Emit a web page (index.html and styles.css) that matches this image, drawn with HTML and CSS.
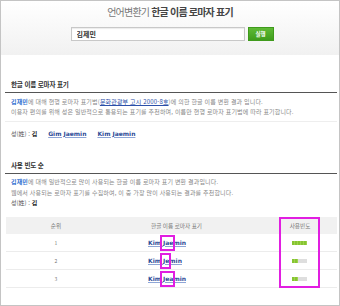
FILE: index.html
```html
<!DOCTYPE html>
<html lang="ko">
<head>
  <meta charset="UTF-8">
  <title>한글 이름 로마자 표기</title>
  <link rel="stylesheet" href="styles.css">
</head>
<body>
  <div class="frame">

    <!-- Search header -->
    <div class="header">
      <h1 class="title">언어변환기 <strong>한글 이름 로마자 표기</strong></h1>
      <form class="search">
        <input class="search-input" type="text" value="김제민">
        <button class="search-btn" type="button">실행</button>
      </form>
    </div>

    <!-- Standard romanization -->
    <div class="section first">
      <h2 class="section-title">한글 이름 로마자 표기</h2>
      <div class="desc bordered">
        <p><b class="name">김재민</b>에 대해 현행 로마자 표기법(<a class="law" href="#">문화관광부 고시 2000-8호</a>)에 의한 한글 이름 변환 결과 입니다.</p>
        <p>이용자 편의를 위해 성은 일반적으로 통용되는 표기를 추천하며, 이름만 현행 로마자 표기법에 따라 표기합니다.</p>
      </div>
      <div class="surname">
        <span>성(姓) : <b>김</b></span>
        <a class="roman" href="#">Gim Jaemin</a>
        <a class="roman" href="#">Kim Jaemin</a>
      </div>
    </div>

    <!-- By frequency -->
    <div class="section second">
      <h2 class="section-title">사용 빈도 순</h2>
      <div class="desc">
        <p><b class="name">김재민</b>에 대해 일반적으로 많이 사용되는 한글 이름 로마자 표기 변환 결과입니다.</p>
        <p>웹에서 사용되는 로마자 표기를 수집하여, 이 중 가장 많이 사용되는 결과를 추천합니다.</p>
      </div>
      <div class="surname short"><span>성(姓) : <b>김</b></span></div>

      <div class="table">
        <div class="row head">
          <div class="cell">순위</div>
          <div class="cell">한글 이름 로마자 표기</div>
          <div class="cell">사용빈도</div>
        </div>
        <div class="row">
          <div class="cell rank">1</div>
          <div class="cell result"><a class="roman" href="#">Kim <span class="mark">Jae</span>min</a></div>
          <div class="cell"><div class="freq"><div class="fill" style="width: 15px"></div></div></div>
        </div>
        <div class="row">
          <div class="cell rank">2</div>
          <div class="cell result"><a class="roman" href="#">Kim <span class="mark">Je</span>min</a></div>
          <div class="cell"><div class="freq"><div class="fill" style="width: 6px"></div></div></div>
        </div>
        <div class="row">
          <div class="cell rank">3</div>
          <div class="cell result"><a class="roman" href="#">Kim <span class="mark">Jea</span>min</a></div>
          <div class="cell"><div class="freq"><div class="fill" style="width: 6px"></div></div></div>
        </div>
        <div class="col-mark"></div>
      </div>
    </div>

  </div>
</body>
</html>
```

FILE: styles.css
```css
body {
  margin: 0;
  font-family: "Noto Sans CJK KR", sans-serif;
  background: #fff;
}

.frame {
  width: 340px;
  height: 306px;
  box-sizing: border-box;
  border: 1px solid #c4c4c4;
  overflow: hidden;
}

.header {
  height: 54px;
  box-sizing: border-box;
  padding-top: 4px;
  background: linear-gradient(to bottom, #fff, #f1f1f1);
  text-align: center;
}

.title {
  margin: 0;
  font-size: 10px;
  line-height: 14px;
  font-weight: normal;
  letter-spacing: -0.8px;
  color: #777;
}

.title strong {
  color: #444;
  font-weight: bold;
}

.search {
  display: flex;
  justify-content: center;
  gap: 3px;
  margin: 8px 0 0 4px;
}

.search-input {
  width: 174px;
  height: 14px;
  box-sizing: border-box;
  padding: 0 5px;
  border: 1px solid #c8c8c8;
  box-shadow: inset 0 1px 1px rgba(0,0,0,0.08);
  font-family: "Noto Sans CJK KR", sans-serif;
  font-size: 7px;
  font-weight: bold;
  color: #333;
}

.search-btn {
  width: 26px;
  height: 14px;
  padding: 0;
  border: 1px solid #3f9a1c;
  background: linear-gradient(to bottom, #5fba36, #3f9d1c);
  color: #fff;
  font-family: "Noto Sans CJK KR", sans-serif;
  font-size: 5.5px;
  font-weight: bold;
}

.section {
  margin: 0 2px 0 4px;
}

.section.first {
  margin-top: 23px;
}

.section.second {
  margin-top: 19px;
}

.section-title {
  margin: 0;
  padding: 0 6px 2px;
  font-size: 6.6px;
  line-height: 12px;
  letter-spacing: -0.2px;
  color: #333;
  border-bottom: 1px solid #555;
}

.desc {
  padding: 3.5px 6px 0;
}

.desc.bordered {
  padding-bottom: 3px;
  border-bottom: 1px solid #eee;
}

.desc p {
  margin: 0;
  font-size: 6px;
  line-height: 10.5px;
  letter-spacing: 0.15px;
  color: #888;
  white-space: nowrap;
}

.name {
  color: #2f6fd0;
}

.law {
  color: #2b4fa8;
}

.surname {
  display: flex;
  align-items: center;
  gap: 11px;
  padding: 6px 6px 0;
  font-size: 6px;
  line-height: 12px;
  color: #555;
}

.surname b {
  color: #222;
}

.surname.short {
  padding-top: 0;
  line-height: 10px;
}

.roman {
  font-family: "DejaVu Sans", sans-serif;
  font-size: 6px;
  font-weight: bold;
  color: #2b4a96;
  text-decoration-color: #8fa6d6;
}

.table {
  position: relative;
  margin: 9px 0 0 1px;
}

.row {
  display: grid;
  grid-template-columns: 100px 141px 1fr;
  height: 18px;
  align-items: center;
  border-bottom: 1px solid #ececec;
  box-sizing: border-box;
  font-size: 5.6px;
  color: #777;
}

.row.head {
  height: 17px;
  background: #f1f1f1;
  border-bottom: none;
}

.cell {
  text-align: center;
}

.cell:nth-child(3) {
  padding-left: 16px;
}

.cell.result {
  text-align: left;
  padding-left: 42px;
}

.rank {
  font-size: 5px;
}

.freq {
  display: inline-block;
  vertical-align: middle;
  width: 15px;
  height: 4px;
  background: #dedede;
  margin-left: -2px;
}

.fill {
  height: 100%;
  background: repeating-linear-gradient(to right, #86c532 0, #86c532 2.4px, #9fd24d 2.4px, #9fd24d 3px);
}

.mark {
  position: relative;
}

.mark::after {
  content: "";
  position: absolute;
  top: -4px;
  bottom: -5px;
  left: -3px;
  right: -2px;
  border: 2px solid #e11ee1;
}

.col-mark {
  position: absolute;
  top: 0;
  left: 273px;
  width: 41px;
  height: 71px;
  box-sizing: border-box;
  border: 2px solid #e11ee1;
}
```
